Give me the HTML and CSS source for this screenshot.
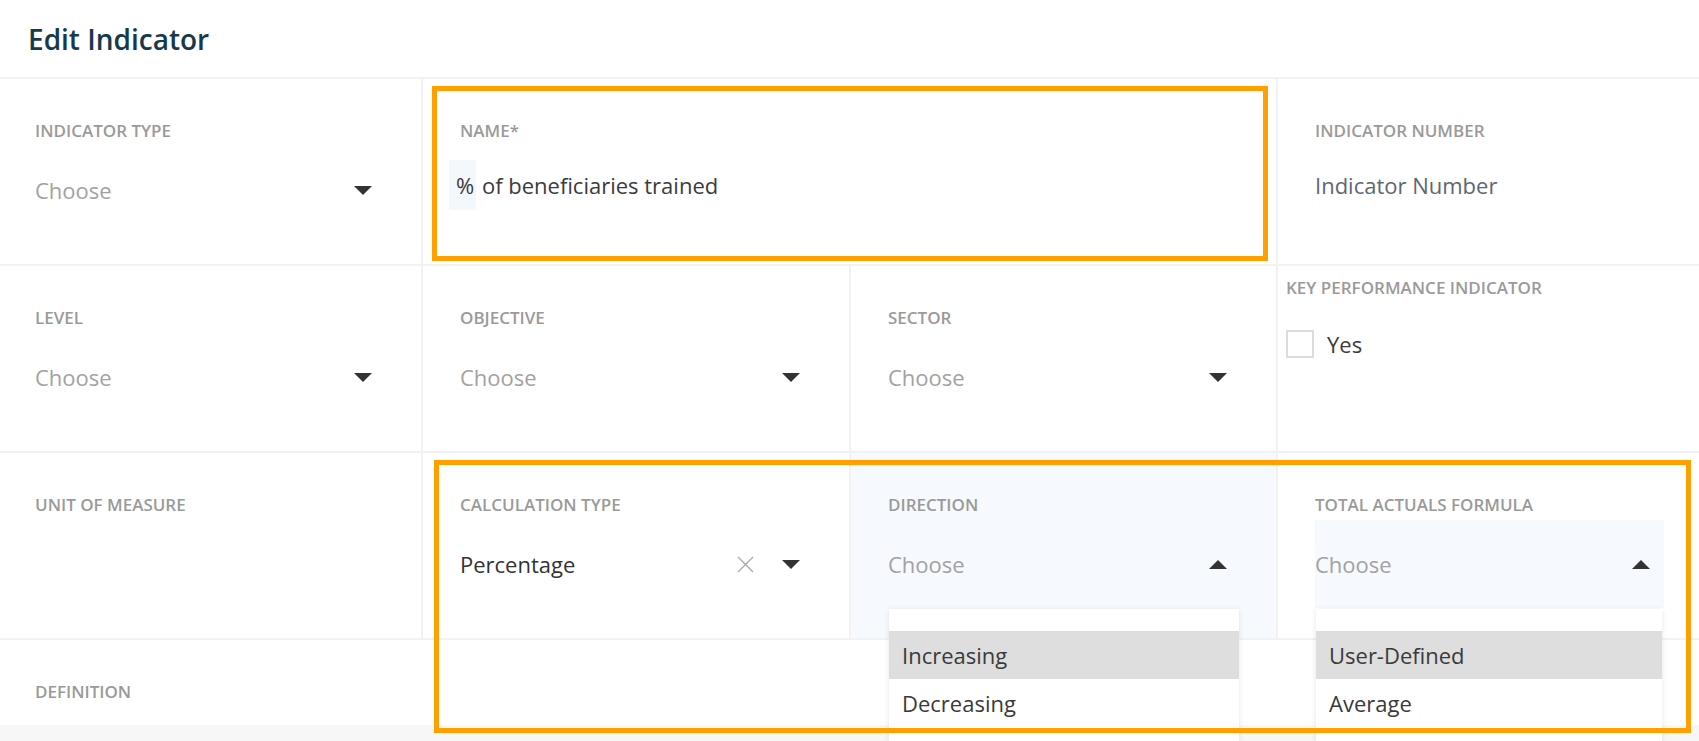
FILE: index.html
```html
<!DOCTYPE html>
<html lang="en">
<head>
    <meta charset="UTF-8">
    <meta name="viewport" content="width=device-width, initial-scale=1.0">
    <title>Edit Indicator</title>
    <link rel="stylesheet" href="styles.css">
</head>
<body>
    <div class="page">
        <div class="page-header">
            <h1>Edit Indicator</h1>
        </div>

        <div class="form">
            <!-- row 1 -->
            <div class="cell first">
                <div class="label">INDICATOR TYPE</div>
                <div class="select">
                    <span>Choose</span>
                    <svg class="caret" width="18" height="9" viewBox="0 0 18 9"><polygon points="0,0 18,0 9,9"/></svg>
                </div>
            </div>
            <div class="cell wide">
                <div class="label">NAME*</div>
                <div class="input name-input"><span class="hl">%</span> of beneficiaries trained</div>
            </div>
            <div class="cell">
                <div class="label">INDICATOR NUMBER</div>
                <div class="input placeholder">Indicator Number</div>
            </div>

            <!-- row 2 -->
            <div class="cell first">
                <div class="label">LEVEL</div>
                <div class="select">
                    <span>Choose</span>
                    <svg class="caret" width="18" height="9" viewBox="0 0 18 9"><polygon points="0,0 18,0 9,9"/></svg>
                </div>
            </div>
            <div class="cell">
                <div class="label">OBJECTIVE</div>
                <div class="select">
                    <span>Choose</span>
                    <svg class="caret" width="18" height="9" viewBox="0 0 18 9"><polygon points="0,0 18,0 9,9"/></svg>
                </div>
            </div>
            <div class="cell">
                <div class="label">SECTOR</div>
                <div class="select">
                    <span>Choose</span>
                    <svg class="caret" width="18" height="9" viewBox="0 0 18 9"><polygon points="0,0 18,0 9,9"/></svg>
                </div>
            </div>
            <div class="cell kpi">
                <div class="label">KEY PERFORMANCE INDICATOR</div>
                <label class="check">
                    <span class="box"></span>
                    <span>Yes</span>
                </label>
            </div>

            <!-- row 3 -->
            <div class="cell first">
                <div class="label">UNIT OF MEASURE</div>
            </div>
            <div class="cell">
                <div class="label">CALCULATION TYPE</div>
                <div class="select filled">
                    <span>Percentage</span>
                    <svg class="clear" width="17" height="17" viewBox="0 0 17 17"><path d="M1 1L16 16M16 1L1 16"/></svg>
                    <svg class="caret" width="18" height="9" viewBox="0 0 18 9"><polygon points="0,0 18,0 9,9"/></svg>
                </div>
            </div>
            <div class="cell active">
                <div class="label">DIRECTION</div>
                <div class="select open">
                    <span>Choose</span>
                    <svg class="caret" width="18" height="9" viewBox="0 0 18 9"><polygon points="0,9 18,9 9,0"/></svg>
                    <div class="menu">
                        <div class="item hover">Increasing</div>
                        <div class="item">Decreasing</div>
                    </div>
                </div>
            </div>
            <div class="cell">
                <div class="label">TOTAL ACTUALS FORMULA</div>
                <div class="select open focused">
                    <span>Choose</span>
                    <svg class="caret" width="18" height="9" viewBox="0 0 18 9"><polygon points="0,9 18,9 9,0"/></svg>
                    <div class="menu">
                        <div class="item hover">User-Defined</div>
                        <div class="item">Average</div>
                    </div>
                </div>
            </div>

            <!-- row 4 -->
            <div class="cell first full">
                <div class="label">DEFINITION</div>
            </div>
        </div>
    </div>

    <!-- highlight frames -->
    <div class="mark mark-name"></div>
    <div class="mark mark-calc"></div>
</body>
</html>
```

FILE: styles.css
```css
*{
    margin:0;
    padding:0;
    box-sizing: border-box;
}
body{
    background:#f7f7f7;
    font-family: "Open Sans", "Noto Sans", sans-serif;
    overflow:hidden;
    height:741px;
    position: relative;
}
.page{
    background:#fff;
}
.page-header{
    height:77px;
    display:flex;
    align-items:center;
    padding-left:28px;
}
.page-header h1{
    font-size:28px;
    font-weight:600;
    color:#163a4a;
}
.form{
    display:grid;
    grid-template-columns: 421px 426px 425px 1fr;
    grid-template-rows: 185px 185px 185px 85px;
    gap:2px;
    background:#f2f2f2;
    border-top:2px solid #f2f2f2;
}
.cell{
    background:#fff;
    padding:40px 35px 0 37px;
    position: relative;
}
.cell.first{
    padding-left:35px;
}
.cell.wide{
    grid-column: span 2;
}
.cell.full{
    grid-column: 1 / -1;
}
.cell.active{
    background:#f6f9fd;
}
.label{
    font-size:17px;
    font-weight:600;
    line-height:24px;
    color:#9a9a9a;
}

/* selects */
.select{
    margin-top:3px;
    height:88px;
    display:flex;
    align-items:center;
    font-size:22px;
    line-height:30px;
    color:#a2a2a2;
    position: relative;
}
.select.filled{
    color:#333;
}
.select.focused{
    background:#f6f9fd;
}
.caret{
    margin-left:auto;
    margin-right:14px;
    fill:#333;
}
.clear{
    margin-left:auto;
    margin-right:28px;
    stroke:#aaa;
    stroke-width:1.4;
}
.clear + .caret{
    margin-left:0;
}
.menu{
    position:absolute;
    top:100%;
    left:1px;
    right:2px;
    margin-top:1px;
    background:#fff;
    box-shadow:0 1px 6px rgba(0,0,0,0.1);
    padding:22px 0 14px;
    z-index:5;
}
.item{
    height:48px;
    line-height:48px;
    padding-left:13px;
    color:#3a3a3a;
}
.item.hover{
    background:#dedede;
}

/* text inputs */
.input{
    margin-top:27px;
    font-size:22px;
    line-height:30px;
    color:#3b3b3b;
}
.name-input{
    margin-left:-4px;
}
.hl{
    background:#f3f8fd;
    padding:10px 2px 10px 7px;
    margin-left:-7px;
}
.input.placeholder{
    color:#5e6772;
}

/* key performance indicator */
.cell.kpi{
    padding:10px 8px 0;
}
.check{
    margin-top:29px;
    display:flex;
    align-items:center;
    gap:13px;
    font-size:22px;
    line-height:30px;
    color:#3b3b3b;
}
.box{
    width:28px;
    height:28px;
    border:2px solid #dcdcdc;
    background:#fff;
}

/* orange frames */
.mark{
    position:absolute;
    border:5px solid #ffa000;
    z-index:10;
}
.mark-name{
    left:432px;
    top:86px;
    width:836px;
    height:175px;
}
.mark-calc{
    left:434px;
    top:460px;
    width:1257px;
    height:273px;
}
```
